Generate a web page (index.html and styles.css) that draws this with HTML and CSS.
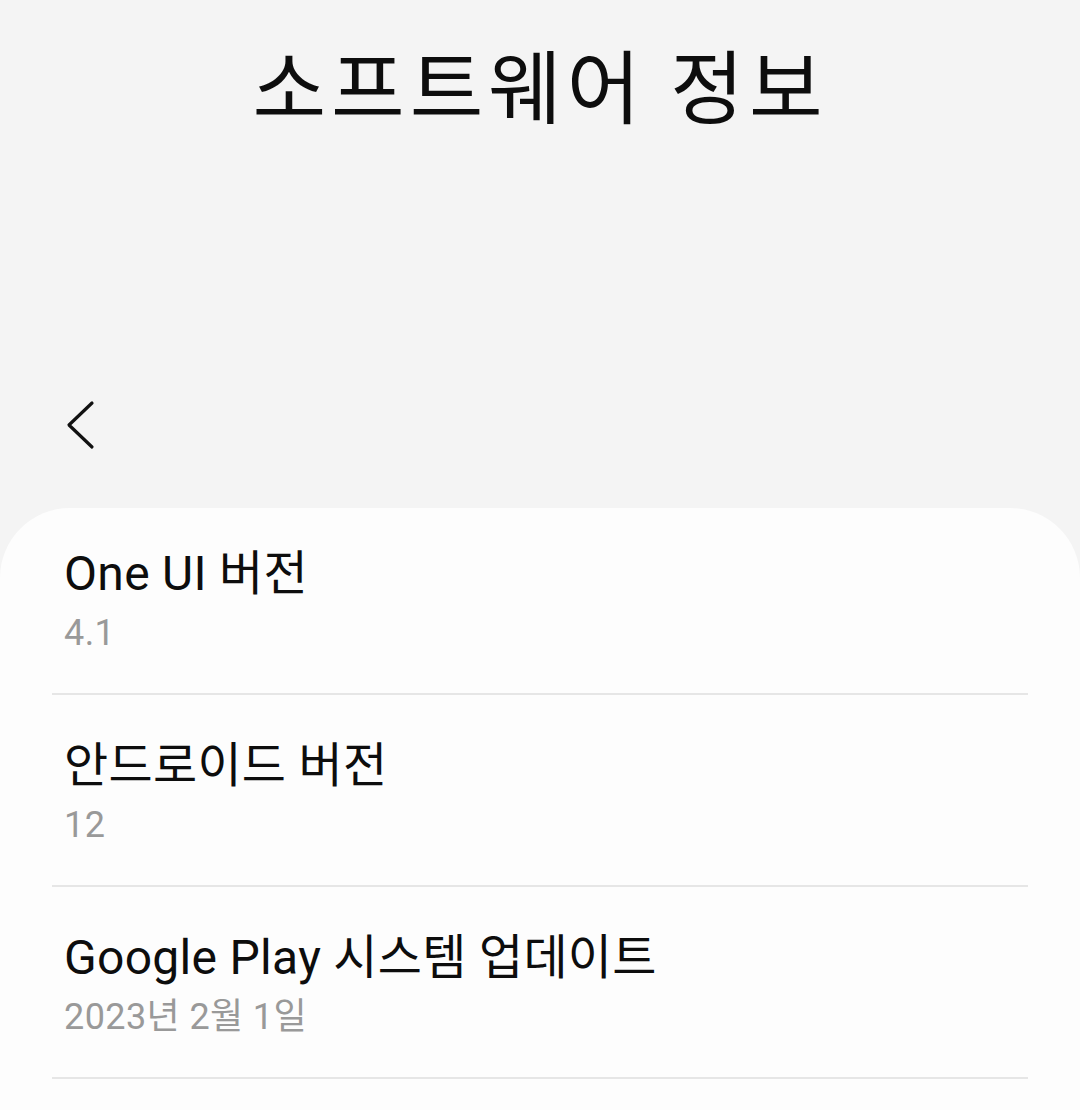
FILE: index.html
```html
<!DOCTYPE html>
<html lang="ko">
<head>
  <meta charset="UTF-8" />
  <meta name="viewport" content="width=device-width, initial-scale=1.0" />
  <title>소프트웨어 정보</title>
  <link rel="stylesheet" href="styles.css">
</head>
<body>
  <header class="header">
    <h1>소프트웨어 정보</h1>
  </header>
  <div class="toolbar">
    <button class="back" aria-label="뒤로">
      <svg width="34" height="50" viewBox="0 0 34 50">
        <path d="M28 3 L5 25 L28 47" fill="none" stroke="#111" stroke-width="3.2" stroke-linecap="round" stroke-linejoin="round"/>
      </svg>
    </button>
  </div>
  <div class="card">
    <div class="item">
      <div class="item-title">One UI 버전</div>
      <div class="item-sub">4.1</div>
    </div>
    <div class="item">
      <div class="item-title">안드로이드 버전</div>
      <div class="item-sub">12</div>
    </div>
    <div class="item">
      <div class="item-title">Google Play 시스템 업데이트</div>
      <div class="item-sub">2023년 2월 1일</div>
    </div>
  </div>
</body>
</html>
```

FILE: styles.css
```css
body {
  margin: 0;
  background: #f4f4f4;
  font-family: Roboto, "Noto Sans CJK KR", sans-serif;
  color: #0d0d0d;
}
.header {
  height: 380px;
  box-sizing: border-box;
  padding-top: 40px;
  text-align: center;
}
.header h1 {
  margin: 0;
  font-size: 80px;
  font-weight: 400;
  letter-spacing: 5px;
  line-height: 100px;
}
.toolbar {
  height: 128px;
  box-sizing: border-box;
  padding: 20px 0 0 64px;
}
.back {
  background: none;
  border: 0;
  padding: 0;
  display: block;
}
.card {
  background: #fdfdfd;
  border-radius: 70px 70px 0 0;
  padding: 0 52px;
  min-height: 602px;
}
.item {
  height: 192px;
  border-bottom: 2px solid #e6e6e6;
  padding: 41px 12px 0;
  box-sizing: border-box;
}
.item:first-child {
  height: 187px;
  padding-top: 36px;
}
.item-title {
  font-size: 48px;
  letter-spacing: 0.3px;
  line-height: 60px;
}
.item-sub {
  font-size: 36px;
  letter-spacing: 0.4px;
  line-height: 58px;
  color: #999;
}
```
